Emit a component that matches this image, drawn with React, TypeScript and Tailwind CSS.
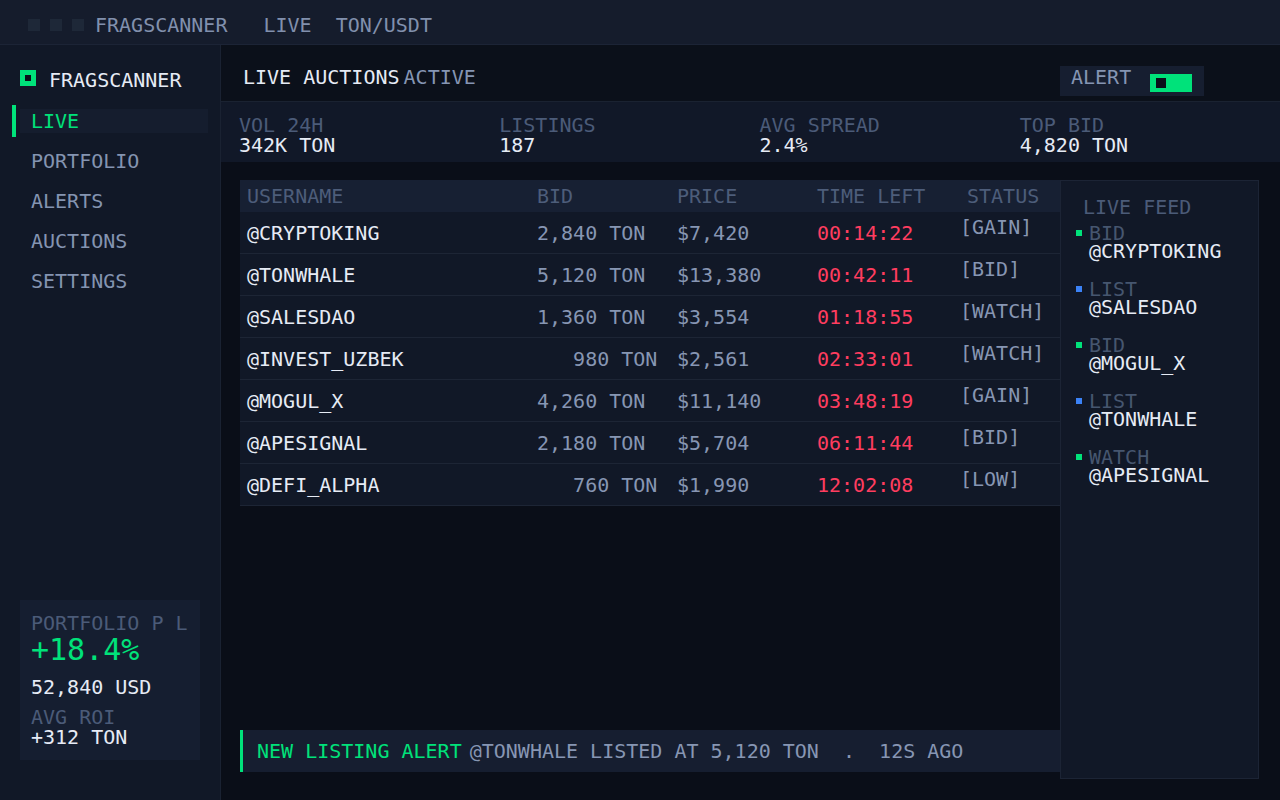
const rows = [
  { user: '@CRYPTOKING', bid: '2,840 TON', price: '$7,420', time: '00:14:22', status: '[GAIN]' },
  { user: '@TONWHALE', bid: '5,120 TON', price: '$13,380', time: '00:42:11', status: '[BID]' },
  { user: '@SALESDAO', bid: '1,360 TON', price: '$3,554', time: '01:18:55', status: '[WATCH]' },
  { user: '@INVEST_UZBEK', bid: '   980 TON', price: '$2,561', time: '02:33:01', status: '[WATCH]' },
  { user: '@MOGUL_X', bid: '4,260 TON', price: '$11,140', time: '03:48:19', status: '[GAIN]' },
  { user: '@APESIGNAL', bid: '2,180 TON', price: '$5,704', time: '06:11:44', status: '[BID]' },
  { user: '@DEFI_ALPHA', bid: '   760 TON', price: '$1,990', time: '12:02:08', status: '[LOW]' },
];

const feed = [
  { kind: 'BID', user: '@CRYPTOKING', dot: 'bg-[#00e27a]' },
  { kind: 'LIST', user: '@SALESDAO', dot: 'bg-[#3b82f6]' },
  { kind: 'BID', user: '@MOGUL_X', dot: 'bg-[#00e27a]' },
  { kind: 'LIST', user: '@TONWHALE', dot: 'bg-[#3b82f6]' },
  { kind: 'WATCH', user: '@APESIGNAL', dot: 'bg-[#00e27a]' },
];

const nav = ['LIVE', 'PORTFOLIO', 'ALERTS', 'AUCTIONS', 'SETTINGS'];

const stats = [
  { label: 'VOL 24H', value: '342K TON' },
  { label: 'LISTINGS', value: '187' },
  { label: 'AVG SPREAD', value: '2.4%' },
  { label: 'TOP BID', value: '4,820 TON' },
];

function Sidebar() {
  return (
    <aside className="w-[221px] shrink-0 flex flex-col bg-[#111827] border-r border-[#1a2232] pt-[25px]">
      <div className="flex items-center h-[16px] pl-[20px]">
        <div className="w-[16px] h-[16px] border-[5px] border-[#00e27a] bg-[#0b101a]" />
        <span className="ml-[13px] mt-[3px] text-[#e6ebf5]">FRAGSCANNER</span>
      </div>
      <nav className="mt-[15px] flex flex-col">
        {nav.map((item, i) => (
          <div key={item} className="h-[40px] flex items-center pl-[12px]">
            <div className={i === 0 ? 'w-[4px] h-[32px] bg-[#00e27a]' : 'w-[4px] h-[32px]'} />
            <div
              className={
                i === 0
                  ? 'ml-[4px] w-[188px] h-[24px] flex items-center pl-[11px] bg-[#151d2e] text-[#00e27a]'
                  : 'ml-[4px] w-[188px] h-[24px] flex items-center pl-[11px] text-[#8494b1]'
              }
            >
              {item}
            </div>
          </div>
        ))}
      </nav>
      <div className="mt-auto mb-[40px] mx-[20px] bg-[#151e30] pl-[11px] pt-[13px] pb-[13px]">
        <div className="leading-[20px] text-[#4b5b78]">PORTFOLIO P L</div>
        <div className="mt-[2px] text-[30px] leading-[30px] text-[#00e27a]">+18.4%</div>
        <div className="mt-[12px] leading-[20px] text-[#e6ebf5]">52,840 USD</div>
        <div className="mt-[10px] leading-[20px] text-[#4b5b78]">AVG ROI</div>
        <div className="leading-[20px] text-[#e6ebf5]">+312 TON</div>
      </div>
    </aside>
  );
}

function AuctionTable() {
  return (
    <div className="w-[820px] bg-[#111827]">
      <div className="grid grid-cols-[290px_140px_140px_150px_1fr] h-[32px] items-center bg-[#172033] text-[#4d5d7a]">
        <div className="pl-[7px]">USERNAME</div>
        <div className="pl-[7px]">BID</div>
        <div className="pl-[7px]">PRICE</div>
        <div className="pl-[7px]">TIME LEFT</div>
        <div className="pl-[7px]">STATUS</div>
      </div>
      {rows.map((r) => (
        <div
          key={r.user}
          className="grid grid-cols-[290px_140px_140px_150px_1fr] h-[42px] items-center border-b border-[#1d2535]"
        >
          <div className="pl-[7px] text-[#e6ebf5]">{r.user}</div>
          <div className="pl-[7px] whitespace-pre text-[#8796b3]">{r.bid}</div>
          <div className="pl-[7px] text-[#8796b3]">{r.price}</div>
          <div className="pl-[7px] text-[#ff3d5f]">{r.time}</div>
          <div className="self-start pt-[3px] text-[#8796b3]">{r.status}</div>
        </div>
      ))}
    </div>
  );
}

function LiveFeed() {
  return (
    <div className="w-[199px] shrink-0 bg-[#111827] border border-[#1c2435] pt-[16px] pl-[15px]">
      <div className="pl-[7px] leading-[20px] text-[#4b5b78]">LIVE FEED</div>
      <div className="mt-[7px] flex flex-col gap-[20px]">
        {feed.map((f) => (
          <div key={f.user} className="flex">
            <div className={`w-[6px] h-[6px] mt-[6px] ${f.dot}`} />
            <div className="ml-[7px] flex flex-col leading-[18px]">
              <span className="text-[#46566f]">{f.kind}</span>
              <span className="text-[#e6ebf5]">{f.user}</span>
            </div>
          </div>
        ))}
      </div>
    </div>
  );
}

export default function App() {
  return (
    <div className="w-[1280px] h-[800px] flex flex-col bg-[#0a0e18] font-['DejaVu_Sans_Mono',monospace] text-[20px] leading-[24px] overflow-hidden">
      <header className="h-[45px] shrink-0 flex items-center pt-[5px] pl-[28px] bg-[#151c2c] border-b border-[#1c2436] text-[#8190ad]">
        <div className="flex gap-[10px]">
          <div className="w-[12px] h-[12px] bg-[#1e2838]" />
          <div className="w-[12px] h-[12px] bg-[#1e2838]" />
          <div className="w-[12px] h-[12px] bg-[#1e2838]" />
        </div>
        <span className="ml-[11px] mt-[1px]">FRAGSCANNER</span>
        <span className="ml-[36px] mt-[1px]">LIVE</span>
        <span className="ml-[24px] mt-[1px]">TON/USDT</span>
      </header>
      <div className="flex flex-1 min-h-0">
        <Sidebar />
        <main className="flex-1 flex flex-col min-w-0">
          <div className="h-[57px] shrink-0 flex items-start justify-between pl-[22px] pr-[76px] bg-[#0b101a] border-b border-[#1a2231]">
            <div className="mt-[20px] flex text-[#e6ebf5]">
              <span>LIVE AUCTIONS</span>
              <span className="ml-[4px] text-[#8595b3]">ACTIVE</span>
            </div>
            <div className="mt-[21px] h-[30px] w-[144px] flex items-start bg-[#161e30] pl-[11px]">
              <span className="mt-[-1px] text-[#8595b3]">ALERT</span>
              <div className="ml-[19px] mt-[8px] w-[42px] h-[18px] bg-[#00e27a] flex items-center pl-[6px]">
                <div className="w-[10px] h-[10px] bg-[#0b101a]" />
              </div>
            </div>
          </div>
          <div className="h-[60px] shrink-0 grid grid-cols-4 pl-[18px] pt-[13px] bg-[#111828]">
            {stats.map((s) => (
              <div key={s.label} className="leading-[20px]">
                <div className="text-[#4b5b78]">{s.label}</div>
                <div className="text-[#e6ebf5]">{s.value}</div>
              </div>
            ))}
          </div>
          <div className="flex-1 min-h-0 flex pl-[19px] pr-[21px] pt-[18px] pb-[21px]">
            <div className="flex flex-col flex-1">
              <AuctionTable />
              <div className="mt-auto mb-[7px] w-[820px] h-[42px] flex items-center bg-[#161e30] border-l-[3px] border-[#00e27a] pl-[14px]">
                <span className="text-[#00e27a]">NEW LISTING ALERT</span>
                <span className="ml-[8px] whitespace-pre text-[#8796b3]">@TONWHALE LISTED AT 5,120 TON  .  12S AGO</span>
              </div>
            </div>
            <LiveFeed />
          </div>
        </main>
      </div>
    </div>
  );
}
